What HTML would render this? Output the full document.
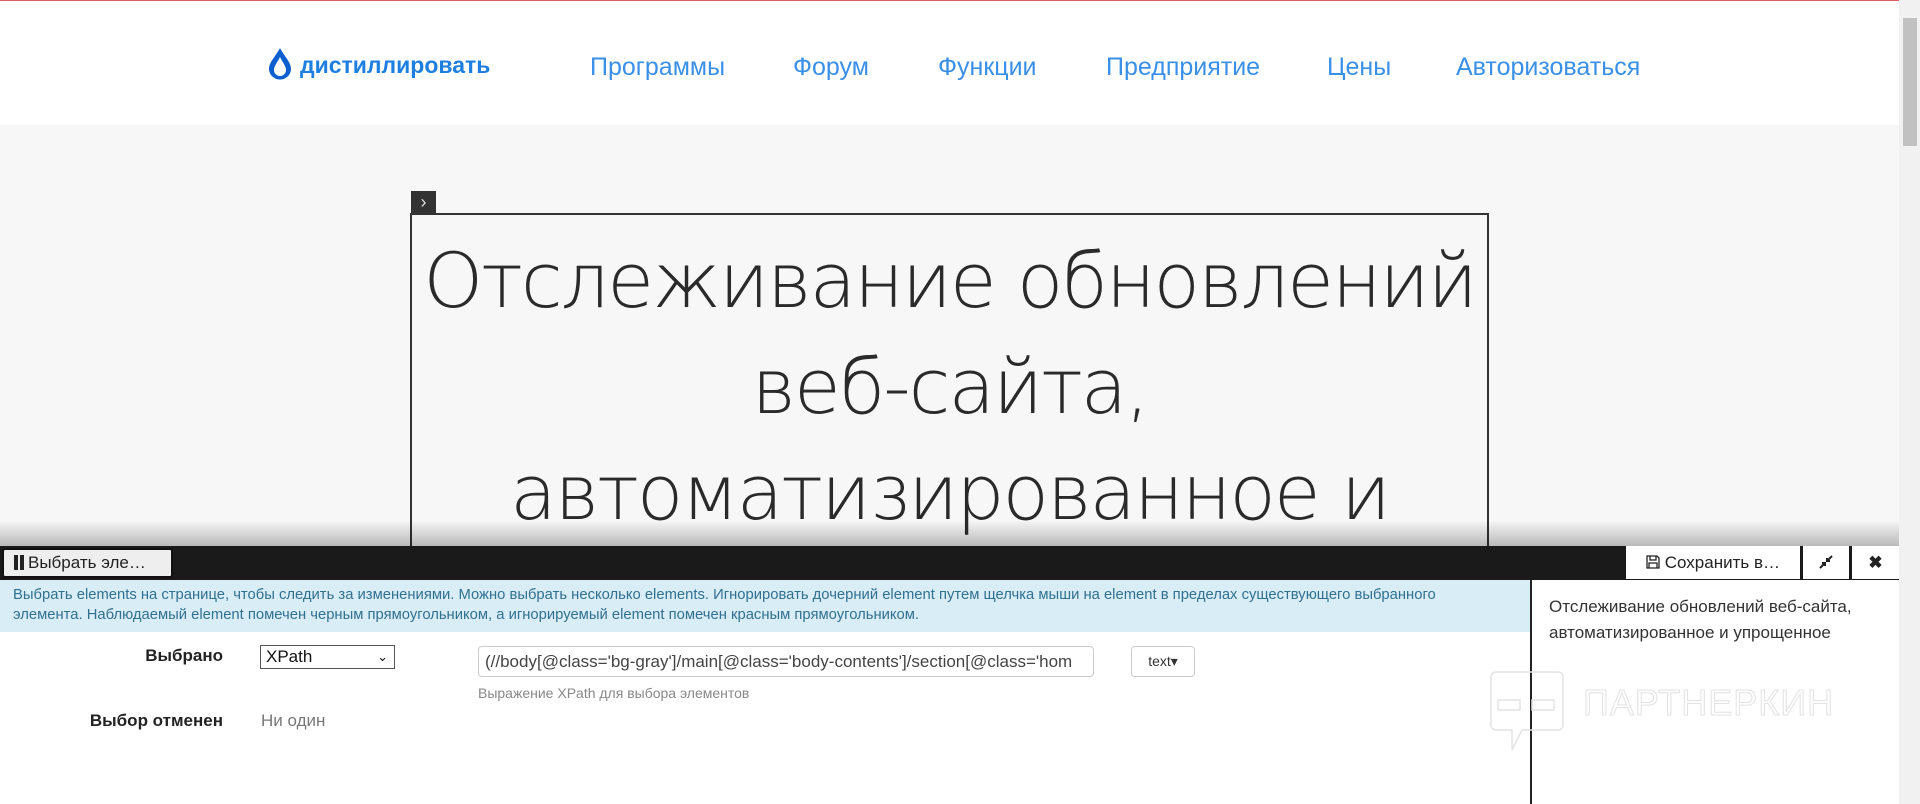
<!DOCTYPE html>
<html><head><meta charset="utf-8">
<style>
*{box-sizing:border-box;margin:0;padding:0}
html,body{width:1920px;height:804px;overflow:hidden}
body{background:#f7f7f7;font-family:"Liberation Sans",sans-serif;position:relative}
.topline{position:absolute;left:0;top:0;width:1920px;height:1px;background:#e06060}
.header{position:absolute;left:0;top:1px;width:1899px;height:124px;background:#fff}
.logo{position:absolute;left:268px;top:45px;height:34px;display:flex;align-items:center}
.logo span{font-size:23px;font-weight:bold;color:#1e7fe0;margin-left:8px;margin-top:4px}
.nav a{position:absolute;top:52px;font-size:25px;color:#3a8fe6;text-decoration:none;white-space:nowrap}
.scroll{position:absolute;left:1899px;top:0;width:21px;height:804px;background:#f1f1f1}
.thumb{position:absolute;left:1903px;top:18px;width:14px;height:128px;background:#c1c1c1}
.chev{position:absolute;left:411px;top:191px;width:25px;height:23px;background:#333;color:#ddd;font-size:18px;text-align:center;line-height:23px}
.box{position:absolute;left:410px;top:213px;width:1079px;height:400px;border:2px solid #333;border-bottom:none}
.h1{position:absolute;left:412px;top:228px;width:1075px;text-align:center;font-family:"DejaVu Sans",sans-serif;font-size:76px;line-height:106px;color:#2a2a2a;font-weight:200;white-space:nowrap;letter-spacing:-2px}
.shadow{position:absolute;left:0;top:520px;width:1899px;height:26px;background:linear-gradient(rgba(0,0,0,0),rgba(0,0,0,.25))}
.panel{position:absolute;left:0;top:546px;width:1899px;height:258px;background:#fff}
.bar{position:absolute;left:0;top:0;width:1899px;height:34px;background:#1a1a1a}
.btn1{position:absolute;left:2px;top:2px;width:171px;height:30px;background:#eee;border:2px solid #111;border-radius:3px;font-size:17px;color:#222;line-height:26px;padding-left:10px}
.pause{display:inline-block;width:4px;height:15px;background:#222;margin-right:2px;vertical-align:-2px}
.rbtn{position:absolute;top:0;height:33px;background:#fff;font-size:17px;color:#222;line-height:33px;text-align:center}
.info{position:absolute;left:0;top:34px;width:1530px;height:52px;background:#d9edf7;color:#31708f;font-size:14.8px;line-height:20px;padding:5px 0 0 13px;white-space:nowrap}
.right{position:absolute;left:1530px;top:34px;width:369px;height:224px;border-left:2px solid #222;padding:14px 0 0 17px;font-size:17px;line-height:26px;color:#333}
.lbl{position:absolute;font-size:17px;font-weight:bold;color:#222;text-align:right;width:223px;left:0}
.sel{position:absolute;left:260px;top:99px;width:135px;height:24px;border:1px solid #555;font-size:17px;line-height:22px;padding-left:5px;color:#111}
.inp{position:absolute;left:478px;top:100px;width:616px;height:31px;border:1px solid #ccc;border-radius:4px;font-size:17px;line-height:29px;padding-left:6px;color:#444;overflow:hidden;white-space:nowrap}
.tb{position:absolute;left:1131px;top:100px;width:64px;height:31px;border:1px solid #ccc;border-radius:4px;font-size:14px;line-height:29px;text-align:center;color:#333}
.help{position:absolute;left:478px;top:139px;font-size:14px;color:#888}
.wm{position:absolute;left:1583px;top:682px;font-size:36px;color:transparent;-webkit-text-stroke:1px #e2e2e2;letter-spacing:1px}
</style></head><body>
<div class="topline"></div>
<div class="header">
 <div class="logo"><svg width="24" height="33" viewBox="0 0 24 33"><path d="M12 1 C8 9 1 15 1 22 A11 10.5 0 0 0 23 22 C23 15 16 9 12 1Z M12 10 C9 16 6 19 6 23 A6 6 0 0 0 18 23 C18 19 15 16 12 10Z" fill="#0b5fd1" fill-rule="evenodd"/></svg><span>дистиллировать</span></div>
 <div class="nav">
  <a style="left:590px">Программы</a><a style="left:793px">Форум</a><a style="left:938px">Функции</a><a style="left:1106px">Предприятие</a><a style="left:1327px">Цены</a><a style="left:1456px">Авторизоваться</a>
 </div>
</div>
<div class="scroll"></div><div class="thumb"></div>
<div class="chev">&#8250;</div>
<div class="box"></div>
<div class="h1">Отслеживание обновлений<br>веб-сайта,<br>автоматизированное и</div>
<div class="shadow"></div>
<div class="panel">
 <div class="bar">
  <div class="btn1"><span class="pause"></span><span class="pause" style="margin-right:4px"></span>Выбрать эле…</div>
  <div class="rbtn" style="left:1626px;width:174px"><svg width="14" height="14" viewBox="0 0 14 14" style="vertical-align:-1px"><path d="M1 1H11L13 3V13H1Z M4 1V5H10V1 M3 13V8H11V13" fill="none" stroke="#222" stroke-width="1.3"/></svg> Сохранить в…</div>
  <div class="rbtn" style="left:1803px;width:46px"><svg width="16" height="16" viewBox="0 0 16 16" style="vertical-align:-2px"><path d="M2 14L7 9M4 9H7V12M14 2L9 7M9 4V7H12" fill="none" stroke="#222" stroke-width="2"/></svg></div>
  <div class="rbtn" style="left:1852px;width:47px;font-weight:bold">&#10006;</div>
 </div>
 <div class="info">Выбрать elements на странице, чтобы следить за изменениями. Можно выбрать несколько elements. Игнорировать дочерний element путем щелчка мыши на element в пределах существующего выбранного<br>элемента. Наблюдаемый element помечен черным прямоугольником, а игнорируемый element помечен красным прямоугольником.</div>
 <div class="right">Отслеживание обновлений веб-сайта,<br>автоматизированное и упрощенное</div>
 <div class="lbl" style="top:100px">Выбрано</div>
 <div class="sel">XPath<span style="position:absolute;right:6px;top:0;font-size:13px">&#8964;</span></div>
 <div class="inp">(//body[@class='bg-gray']/main[@class='body-contents']/section[@class='hom</div>
 <div class="tb">text&#9662;</div>
 <div class="help">Выражение XPath для выбора элементов</div>
 <div class="lbl" style="top:165px">Выбор отменен</div>
 <div style="position:absolute;left:261px;top:165px;font-size:17px;color:#777">Ни один</div>
</div>
<svg style="position:absolute;left:1490px;top:670px" width="75" height="90" viewBox="0 0 75 90"><path d="M6 2H68A5 5 0 0 1 73 7V55A5 5 0 0 1 68 60H32L22 80V60H6A5 5 0 0 1 1 55V7A5 5 0 0 1 6 2Z M8 30H30V40H8Z M42 30H64V40H42Z" fill="none" stroke="#e4e4e4" stroke-width="1.5"/></svg>
<div class="wm">ПАРТНЕРКИН</div>
</body></html>
